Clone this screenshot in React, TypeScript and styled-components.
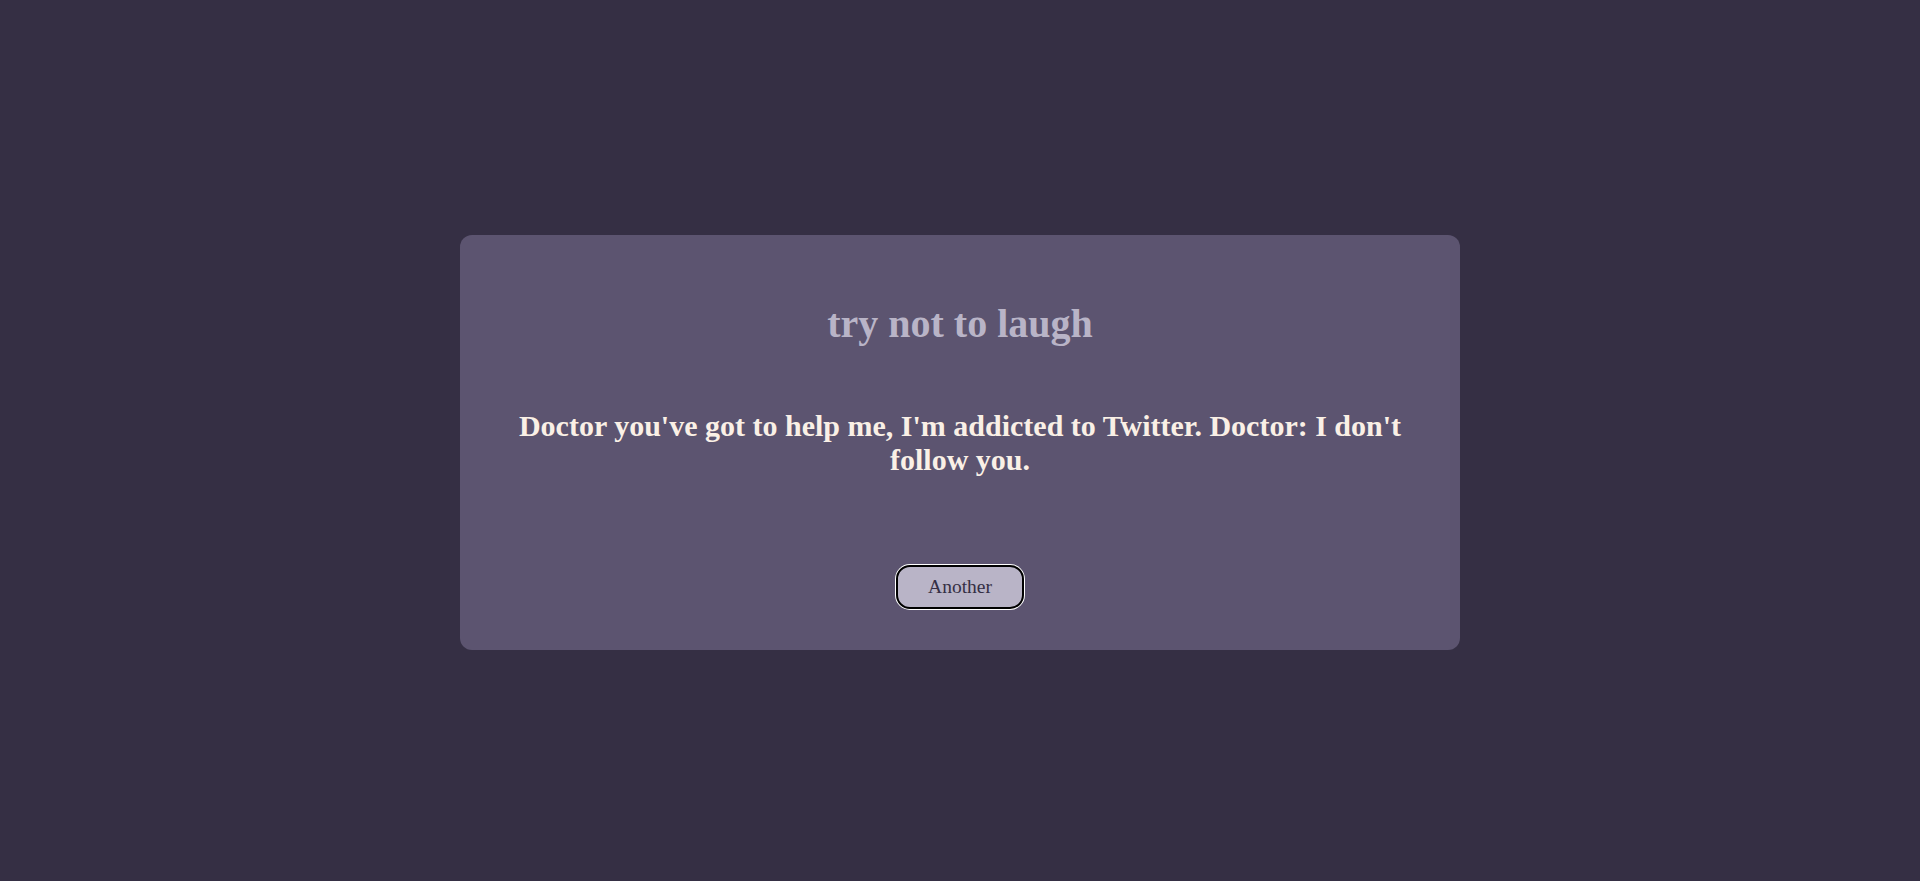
import React from "react";
import styled, { createGlobalStyle } from "styled-components";

const GlobalStyle = createGlobalStyle`
  html, body {
    margin: 0;
    padding: 0;
    background: #352f44;
  }
  body {
    font-family: "Liberation Serif", "Times New Roman", serif;
  }
`;

const Page = styled.main`
  box-sizing: border-box;
  min-height: 100vh;
  padding-top: 3px;
  display: flex;
  align-items: center;
  justify-content: center;
  background: #352f44;
`;

const Card = styled.section`
  box-sizing: border-box;
  width: 1000px;
  padding: 65px 40px 39.5px;
  background: #5c5470;
  border-radius: 12px;
  display: flex;
  flex-direction: column;
  align-items: center;
  text-align: center;
`;

const Title = styled.h1`
  margin: 0 0 62.5px;
  font-family: "Liberation Serif", "Times New Roman", serif;
  font-size: 40px;
  font-weight: 700;
  line-height: normal;
  color: #b9b4c7;
`;

const Joke = styled.p`
  margin: 0 0 87px;
  font-family: "Liberation Serif", "Times New Roman", serif;
  font-size: 30px;
  font-weight: 700;
  line-height: normal;
  color: #faf0e6;
`;

const Button = styled.button`
  box-sizing: border-box;
  margin-top: 1px;
  margin-bottom: 1px;
  padding: 9px 30px;
  font-family: "Liberation Serif", "Times New Roman", serif;
  font-size: 19.5px;
  line-height: normal;
  color: #352f44;
  background: #b9b4c7;
  border: 2px solid #000;
  border-radius: 14px;
  box-shadow: 0 0 0 1px #fff;
  cursor: pointer;
`;

export default function App() {
  return (
    <>
      <GlobalStyle />
      <Page>
        <Card>
          <Title>try not to laugh</Title>
          <Joke>
            Doctor you've got to help me, I'm addicted to Twitter. Doctor: I
            don't follow you.
          </Joke>
          <Button type="button">Another</Button>
        </Card>
      </Page>
    </>
  );
}
